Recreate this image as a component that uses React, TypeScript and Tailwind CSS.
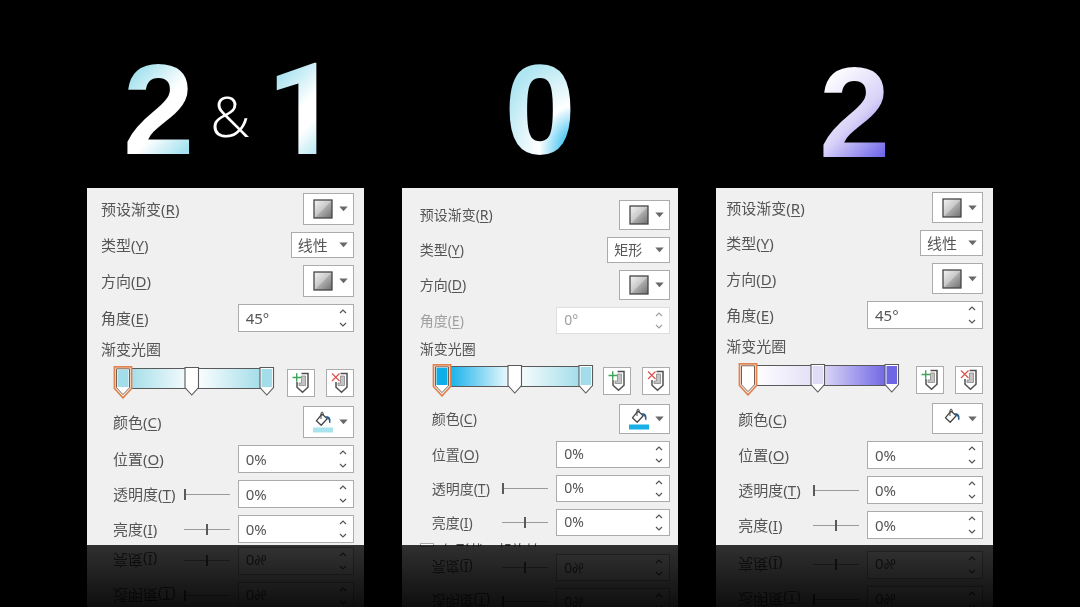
import type { ReactNode } from "react";

type Stops = {
  start: string;
  middle: string;
  end: string;
  middleX: number;
};

type PanelProps = {
  id: string;
  type: string;
  angle: string;
  angleDisabled?: boolean;
  stops: Stops;
  fill: string;
  // spacing and sizes of this panel
  pad: string;
  text: string;
  title: string;
  swatch: string;
  field: string;
  children?: ReactNode;
};

const Caret = () => (
  <svg width="9" height="6" viewBox="0 0 9 6" aria-hidden="true">
    <path d="M0.3 0.5h8.4L4.5 5.3z" fill="#696969" />
  </svg>
);

const SwatchIcon = ({ id }: { id: string }) => (
  <svg width="20" height="20" viewBox="0 0 20 20" aria-hidden="true">
    <defs>
      <linearGradient id={id} x1="0" y1="0" x2="1" y2="1">
        <stop offset="0" stopColor="#f4f4f4" />
        <stop offset="0.5" stopColor="#c8c8c8" />
        <stop offset="0.52" stopColor="#aeaeae" />
        <stop offset="1" stopColor="#6e6e6e" />
      </linearGradient>
    </defs>
    <rect x="1" y="1" width="18" height="18" fill={`url(#${id})`} stroke="#454545" strokeWidth="1.3" />
  </svg>
);

const BucketIcon = ({ color }: { color: string }) => (
  <svg width="20" height="22" viewBox="0 0 20 22" aria-hidden="true">
    <path d="M9 3L3.4 9.800l4.800 4.400 6-6.400z" fill="#fff" stroke="#484848" strokeWidth="1.3" strokeLinejoin="round" />
    <path d="M8 8V2.400c0-1.700 2.200-1.700 2.200 0V5" fill="none" stroke="#484848" strokeWidth="1" />
    <path d="M12.4 5.400c3.700-.800 6 1.400 4.900 6.800l-1.300-.600c.200-2-.200-3.200-1.600-4.100z" fill="#2a5f8f" />
    <rect y="16.500" width="20" height="5" fill={color} />
  </svg>
);

const StopIcon = ({ remove }: { remove?: boolean }) => (
  <svg width="18" height="22" viewBox="0 0 18 22" aria-hidden="true">
    <path d="M9.500 4h4v9.500H7V11h2.500z" fill="#c4c4c4" stroke="#8a8a8a" strokeWidth="0.8" />
    <path d="M9.500 1.500h6.500v13.700l-5.500 5-5.500-5V10" fill="none" stroke="#505050" strokeWidth="1.5" />
    {remove ? (
      <path d="M1 1.500l7.500 7.500M8.500 1.500L1 9" stroke="#e0504a" strokeWidth="1.2" />
    ) : (
      <path d="M0.500 5.500h8.500M4.700 1.300v8.400" stroke="#3fa45b" strokeWidth="1.400" />
    )}
  </svg>
);

const Handle = ({ x, color }: { x: number; color: string }) => (
  <g>
    <path d={`M${x} 1.500h13.500v20l-6.750 7.500-6.750-7.500z`} fill="#fff" stroke="#5a5a5a" strokeWidth="1.100" />
    <rect x={x + 1.5} y="3" width="10.500" height="18" fill={color} />
  </g>
);

const GradientBar = ({ id, stops }: { id: string; stops: Stops }) => (
  <svg width="162" height="33" viewBox="0 0 162 33" role="img" aria-label="渐变光圈">
    <defs>
      <linearGradient id={id}>
        <stop offset="0.05" stopColor={stops.start} />
        <stop offset="0.5" stopColor={stops.middle} />
        <stop offset="0.95" stopColor={stops.end} />
      </linearGradient>
    </defs>
    <rect x="8" y="2.500" width="148" height="20" fill={`url(#${id})`} stroke="#5a5a5a" />
    <Handle x={stops.middleX - 7} color={stops.middle} />
    <Handle x={147} color={stops.end} />
    <path d="M1.500 0.800h17v21.700L10 31.800 1.500 22.500z" fill="#fff" stroke="#e08350" strokeWidth="1.800" />
    <path d="M3.500 2.800h13v19L10 28.600 3.500 21.800z" fill="#fff" stroke="#6b4a35" strokeWidth="0.900" />
    <rect x="4.500" y="3.800" width="11" height="17.200" fill={stops.start} />
  </svg>
);

const Name = ({ text, hotkey }: { text: string; hotkey: string }) => (
  <>
    {text}(<u className="underline-offset-2">{hotkey}</u>)
  </>
);

const boxed = "flex items-center justify-between border border-[#ababab] bg-white";

const SwatchButton = ({ size, label, children }: { size: string; label: string; children: ReactNode }) => (
  <button type="button" aria-label={label} className={`${boxed} w-[51px] pr-[5px] pl-[9px] ${size}`}>
    {children}
    <Caret />
  </button>
);

const Spin = ({ id, value, size, disabled }: { id: string; value: string; size: string; disabled?: boolean }) => (
  <div className={`${boxed} ${size} ${disabled ? "border-[#dedede]! text-[#a0a0a0]" : ""}`}>
    <input id={id} defaultValue={value} disabled={disabled} className="w-20 bg-transparent pb-px pl-[7px] outline-none" />
    <div className="flex h-full flex-col justify-between py-1 pr-[6px]">
      <button type="button" aria-label="增加" disabled={disabled}>
        <svg width="8" height="5" viewBox="0 0 8 5" aria-hidden="true" className="block">
          <path d="M1 4l3-3 3 3" fill="none" stroke="currentColor" strokeWidth="1.200" />
        </svg>
      </button>
      <button type="button" aria-label="减少" disabled={disabled}>
        <svg width="8" height="5" viewBox="0 0 8 5" aria-hidden="true" className="block">
          <path d="M1 1l3 3 3-3" fill="none" stroke="currentColor" strokeWidth="1.200" />
        </svg>
      </button>
    </div>
  </div>
);

const Slider = ({ label, value }: { label: string; value: number }) => (
  <input
    type="range"
    aria-label={label}
    defaultValue={value}
    className="mr-2 h-4 w-[46px] appearance-none bg-transparent [&::-webkit-slider-runnable-track]:h-px [&::-webkit-slider-runnable-track]:bg-[#9a9a9a] [&::-webkit-slider-thumb]:-mt-[5px] [&::-webkit-slider-thumb]:h-[11px] [&::-webkit-slider-thumb]:w-[2px] [&::-webkit-slider-thumb]:appearance-none [&::-webkit-slider-thumb]:bg-[#5a5a5a]"
  />
);

const Panel = ({ id, type, angle, angleDisabled, stops, fill, pad, text, title, swatch, field, children }: PanelProps) => (
  <section
    className={`flex flex-col gap-[7px] bg-[#f0f0f0] text-[#555555] [-webkit-box-reflect:below_0px_linear-gradient(to_top,rgba(0,0,0,0.2),rgba(0,0,0,0.06)_62px,transparent_90px)] ${pad} ${text}`}
  >
    <div className="flex items-center justify-between">
      <span><Name text="预设渐变" hotkey="R" /></span>
      <SwatchButton size={swatch} label="预设渐变">
        <SwatchIcon id={`${id}-preset`} />
      </SwatchButton>
    </div>

    <div className="flex items-center justify-between">
      <label htmlFor={`${id}-type`}><Name text="类型" hotkey="Y" /></label>
      <div className="relative">
        <select
          id={`${id}-type`}
          className="block h-[26px] w-[63px] appearance-none border border-[#ababab] bg-white pl-[6px] outline-none"
        >
          <option>{type}</option>
        </select>
        <div className="pointer-events-none absolute inset-y-0 right-[6px] flex items-center">
          <Caret />
        </div>
      </div>
    </div>

    <div className="flex items-center justify-between">
      <span><Name text="方向" hotkey="D" /></span>
      <SwatchButton size={swatch} label="方向">
        <SwatchIcon id={`${id}-direction`} />
      </SwatchButton>
    </div>

    <div className="flex items-center justify-between">
      <label htmlFor={`${id}-angle`} className={angleDisabled ? "text-[#a0a0a0]" : ""}>
        <Name text="角度" hotkey="E" />
      </label>
      <Spin id={`${id}-angle`} value={angle} size={field} disabled={angleDisabled} />
    </div>

    <p className={title}>渐变光圈</p>

    <div className="flex items-center justify-between pl-3">
      <GradientBar id={`${id}-bar`} stops={stops} />
      <div className="flex gap-[11px]">
        <button type="button" aria-label="添加渐变光圈" className="flex size-7 items-center justify-center border border-[#ababab] bg-white">
          <StopIcon />
        </button>
        <button type="button" aria-label="删除渐变光圈" className="flex size-7 items-center justify-center border border-[#ababab] bg-white">
          <StopIcon remove />
        </button>
      </div>
    </div>

    <div className="flex items-center justify-between pl-3">
      <span><Name text="颜色" hotkey="C" /></span>
      <SwatchButton size={swatch} label="颜色">
        <BucketIcon color={fill} />
      </SwatchButton>
    </div>

    <div className="flex items-center justify-between pl-3">
      <label htmlFor={`${id}-position`}><Name text="位置" hotkey="O" /></label>
      <Spin id={`${id}-position`} value="0%" size={field} />
    </div>

    <div className="flex items-center pl-3">
      <label htmlFor={`${id}-opacity`} className="flex-1"><Name text="透明度" hotkey="T" /></label>
      <Slider label="透明度" value={0} />
      <Spin id={`${id}-opacity`} value="0%" size={field} />
    </div>

    <div className="flex items-center pl-3">
      <label htmlFor={`${id}-light`} className="flex-1"><Name text="亮度" hotkey="I" /></label>
      <Slider label="亮度" value={50} />
      <Spin id={`${id}-light`} value="0%" size={field} />
    </div>

    {children}
  </section>
);

const digit = "bg-clip-text font-['Liberation_Sans'] text-9xl leading-none font-bold text-transparent";
const ice = "bg-[linear-gradient(135deg,#a5e2ef_20%,#ffffff_48%,#ffffff_60%,#a5e2ef_84%)]";

export default function App() {
  return (
    <main className="min-h-screen overflow-hidden bg-black font-['Noto_Sans','Noto_Sans_CJK_SC',sans-serif]">
      <div className="grid grid-cols-3 gap-x-[38px] px-[87px]">
        <h2 className="flex h-[188px] items-baseline justify-center pt-[46px] pl-3">
          <span className={`${digit} ${ice}`}>2</span>
          <span className="mx-4 self-center pb-1 font-['Open_Sans'] text-[56px] leading-none font-light text-white">&amp;</span>
          <span className={`${digit} ${ice} font-['Roboto']!`}>1</span>
        </h2>
        <h2 className="flex h-[188px] items-baseline justify-center pt-[46px]">
          <span className={`${digit} bg-[radial-gradient(100px_120px_at_100%_81%,#12b4ee_5%,#ffffff_37%,#b0e6f2_80%)]`}>0</span>
        </h2>
        <h2 className="flex h-[188px] items-baseline justify-center pt-[49px]">
          <span className={`${digit} bg-[linear-gradient(135deg,#ffffff_18%,#d9d2f8_54%,#6f66ea_86%)]`}>2</span>
        </h2>

        <Panel
          id="ice"
          type="线性"
          angle="45°"
          stops={{ start: "#a2dde9", middle: "#ffffff", end: "#a2dde9", middleX: 79 }}
          fill="#a9e3ee"
          pad="pt-[5px] pr-[10px] pb-[2px] pl-[14px]"
          text="text-[15px] leading-5"
          title="leading-5"
          swatch="h-8"
          field="h-7 w-29"
        />
        <Panel
          id="sky"
          type="矩形"
          angle="0°"
          angleDisabled
          stops={{ start: "#0eaee8", middle: "#ffffff", end: "#a2dde9", middleX: 83 }}
          fill="#16b0e6"
          pad="pt-[12px] pr-[8px] pl-[18px]"
          text="text-[14px] leading-5"
          title="leading-4"
          swatch="h-[30px]"
          field="h-[27px] w-[114px]"
        >
          {/* next option is cut off by the panel edge */}
          <label className="flex h-[2px] items-start gap-2 overflow-hidden leading-[14px]">
            <input type="checkbox" className="size-[14px] shrink-0 appearance-none border border-[#ababab] bg-white" />
            <span><Name text="与形状一起旋转" hotkey="W" /></span>
          </label>
        </Panel>
        <Panel
          id="violet"
          type="线性"
          angle="45°"
          stops={{ start: "#ffffff", middle: "#e1dcf6", end: "#6f66e6", middleX: 80 }}
          fill="#ffffff"
          pad="pt-[4px] pr-[10px] pl-[10px]"
          text="text-[15px] leading-5"
          title="leading-5"
          swatch="h-[31px]"
          field="h-7 w-29"
        />
      </div>
    </main>
  );
}
